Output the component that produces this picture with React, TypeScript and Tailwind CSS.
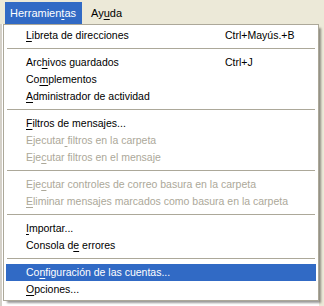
type Item =
  | { sep: true }
  | { sep?: false; label: React.ReactNode; shortcut?: string; disabled?: boolean; active?: boolean };

const u = (c: string) => <span className="underline underline-offset-2">{c}</span>;

const ITEMS: Item[] = [
  { label: <>{u("L")}ibreta de direcciones</>, shortcut: "Ctrl+Mayús.+B" },
  { sep: true },
  { label: <>Arc{u("h")}ivos guardados</>, shortcut: "Ctrl+J" },
  { label: <>Co{u("m")}plementos</> },
  { label: <>{u("A")}dministrador de actividad</> },
  { sep: true },
  { label: <>{u("F")}iltros de mensajes...</> },
  { label: <>Ejecutar{u(" ")}filtros en la carpeta</>, disabled: true },
  { label: <>Eje{u("c")}utar filtros en el mensaje</>, disabled: true },
  { sep: true },
  { label: <>Eje{u("c")}utar controles de correo basura en la carpeta</>, disabled: true },
  { label: <>{u("E")}liminar mensajes marcados como basura en la carpeta</>, disabled: true },
  { sep: true },
  { label: <>{u("I")}mportar...</> },
  { label: <>Consola d{u("e")} errores</> },
  { sep: true },
  { label: <>Co{u("n")}figuración de las cuentas...</>, active: true },
  { label: <>{u("O")}pciones...</> },
];

export default function App() {
  return (
    <div
      className="relative w-[324px] h-[306px] overflow-hidden bg-white text-[10.5px] text-black"
      style={{ fontFamily: '"Liberation Sans", Arial, sans-serif' }}
    >
      {/* menu bar */}
      <div className="h-[24px] bg-[#ece9d8] flex items-end text-[11px]">
        <div className="h-[22px] w-[77px] pl-[5px] ml-[5px] bg-[#316ac5] text-white flex items-center">
          Herramien{u("t")}as
        </div>
        <div className="h-[22px] px-[9px] flex items-center">Ay{u("u")}da</div>
      </div>

      {/* window behind the menu */}
      <div className="h-[282px] flex">
        <div className="w-[2px] bg-[#d4d0c8]" />
        <div className="flex-1" />
        <div className="w-[5px] bg-[#ece9d8]" />
      </div>

      {/* dropdown */}
      <div className="absolute left-[3px] top-[24px] w-[316px] border border-[#aca899] bg-white p-[2px] shadow-[3px_3px_2px_-1px_rgba(0,0,0,0.4)]">
        {ITEMS.map((it, i) =>
          it.sep ? (
            <div key={i} className="h-[10px] pt-[4px] px-[1px]">
              <div className="h-px bg-[#aca899]" />
            </div>
          ) : (
            <div
              key={i}
              className={`h-[17px] flex items-center pl-[20px] whitespace-nowrap ${
                it.active ? "bg-[#316ac5] text-white" : it.disabled ? "text-[#aca899]" : ""
              }`}
            >
              <span className="w-[199px]">{it.label}</span>
              {it.shortcut && <span>{it.shortcut}</span>}
            </div>
          )
        )}
      </div>
    </div>
  );
}
